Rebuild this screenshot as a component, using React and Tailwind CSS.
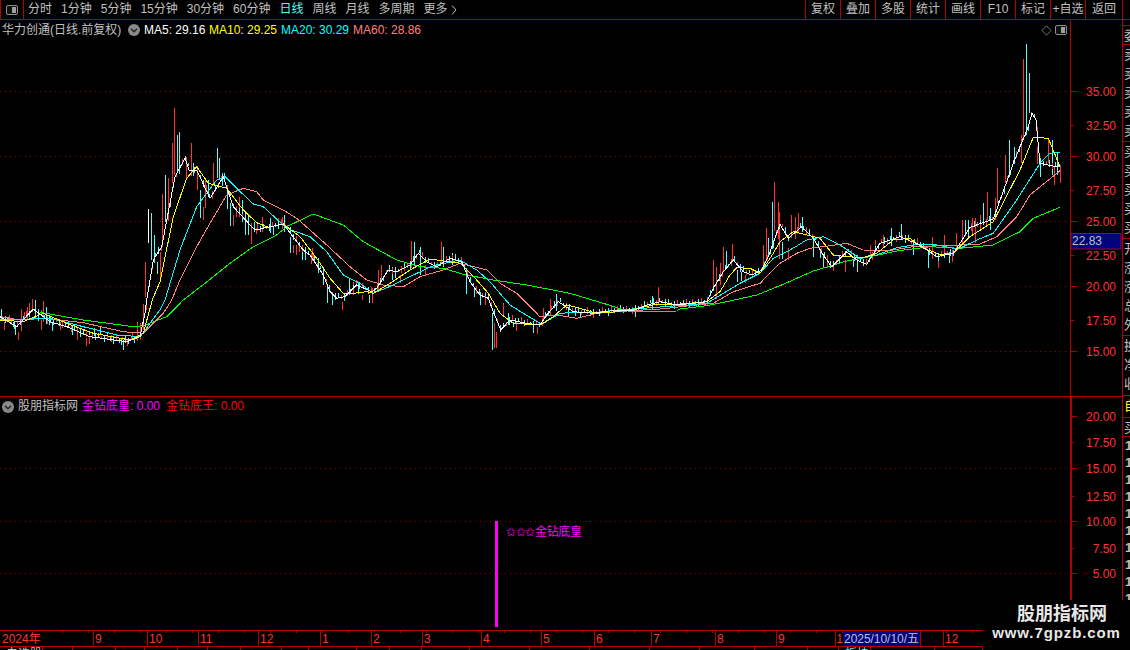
const RED = '#ff3232';
const CYAN = '#54fcfc';
const LINE = '#b00000';

// chart data was read off crops at 3x, so keep the crop origin and scale back here
const z = (ox, oy, pts) => pts.map(([x, y]) => [ox + x / 3, oy + y / 3]);
const A = (p) => z(0, 280, p);
const B = (p) => z(120, 100, p);
const C = (p) => z(310, 225, p);
const D = (p) => z(680, 175, p);
const E = (p) => z(960, 120, p);

const white = [
  ...A([[0, 110], [50, 140], [100, 87], [150, 125], [200, 140], [270, 170], [380, 185], [420, 170], [435, 100]]),
  ...B([[80, 600], [100, 480], [125, 440], [165, 230], [195, 175], [207, 210], [230, 210], [270, 295], [310, 230], [340, 320], [395, 380], [405, 390], [490, 372], [550, 450]]),
  ...C([[0, 90], [40, 150], [60, 200], [80, 220], [105, 215], [140, 180], [185, 200], [200, 190], [235, 135], [260, 140], [300, 120], [325, 85], [350, 110], [380, 125], [420, 100], [455, 110], [480, 170], [510, 210], [535, 220], [550, 260], [572, 315], [600, 285], [650, 295], [690, 300], [710, 270], [745, 230], [790, 260], [850, 265], [920, 255], [975, 255], [1010, 240], [1050, 230], [1100, 240]]),
  ...D([[80, 380], [100, 340], [130, 290], [160, 255], [190, 290], [215, 300], [245, 285], [265, 245], [300, 148], [325, 190], [365, 155], [400, 190], [430, 240], [455, 275], [500, 230], [530, 255], [560, 268], [600, 205], [660, 185], [720, 210], [770, 245], [820, 235]]),
  ...E([[0, 370], [30, 322], [100, 297], [160, 130], [205, 20], [216, -21], [228, 0], [240, 130], [290, 140], [300, 135]]),
];
const yellow = [
  ...A([[0, 120], [70, 125], [130, 100], [200, 130], [280, 160], [390, 180], [430, 160]]),
  ...B([[97, 600], [120, 545], [160, 350], [200, 235], [230, 200], [265, 250], [320, 265], [370, 330], [410, 368], [445, 382], [490, 372], [540, 410]]),
  ...C([[20, 100], [60, 160], [100, 205], [130, 205], [170, 200], [190, 205], [240, 175], [300, 135], [360, 102], [400, 108], [450, 115], [500, 165], [535, 205], [570, 265], [610, 295], [690, 300], [730, 275], [770, 240], [810, 250], [860, 265], [920, 260], [975, 252], [1030, 240], [1100, 238]]),
  ...D([[80, 380], [120, 350], [150, 300], [170, 278], [210, 280], [240, 295], [280, 235], [300, 200], [340, 170], [380, 180], [420, 190], [460, 240], [500, 245], [550, 248], [590, 235], [640, 195], [690, 190], [730, 220], [780, 238], [820, 235]]),
  ...E([[0, 380], [30, 350], [100, 305], [180, 150], [220, 52], [265, 55], [300, 140]]),
];
const cyan = [
  ...A([[0, 120], [60, 118], [150, 115], [250, 140], [350, 165], [420, 170], [480, 90]]),
  ...B([[135, 600], [180, 450], [230, 320], [290, 240], [315, 230], [350, 265], [400, 312], [430, 320], [500, 385]]),
  ...C([[0, 35], [50, 80], [100, 150], [150, 175], [190, 205], [250, 180], [310, 150], [370, 122], [450, 105], [500, 135], [540, 170], [600, 240], [640, 265], [695, 298], [750, 265], [800, 262], [860, 262], [920, 255], [1000, 250], [1100, 242]]),
  ...D([[0, 392], [80, 385], [130, 355], [180, 325], [240, 295], [280, 250], [330, 225], [380, 195], [430, 185], [480, 210], [540, 250], [590, 240], [650, 218], [710, 208], [770, 210], [830, 222]]),
  ...E([[0, 385], [50, 360], [100, 340], [170, 240], [240, 130], [270, 100], [300, 97]]),
];
const pink = [
  ...A([[0, 110], [60, 120], [130, 115], [250, 128], [370, 155], [430, 160], [490, 100]]),
  ...B([[155, 600], [180, 540], [230, 440], [270, 370], [320, 285], [370, 265], [410, 275], [430, 300], [490, 330], [530, 355]]),
  ...C([[0, 15], [50, 60], [120, 125], [170, 165], [220, 180], [280, 185], [330, 155], [400, 135], [450, 115], [530, 135], [570, 175], [620, 205], [690, 275], [740, 270], [800, 280], [860, 265], [950, 258], [1050, 252], [1100, 247]]),
  ...D([[0, 395], [100, 385], [160, 350], [240, 325], [300, 265], [350, 235], [390, 220], [450, 212], [500, 205], [550, 225], [620, 228], [700, 215], [780, 212]]),
  ...E([[0, 375], [60, 372], [110, 350], [170, 290], [210, 225], [300, 152]]),
];
const green = [
  ...A([[120, 97], [250, 120], [400, 140], [430, 137], [500, 110]]),
  ...B([[190, 600], [255, 550], [330, 490], [400, 440], [470, 405], [500, 380], [580, 342]]),
  ...C([[100, 0], [160, 50], [260, 105], [330, 125], [400, 130], [460, 148], [550, 165], [650, 180], [780, 205], [880, 235], [960, 260], [1100, 258]]),
  ...D([[0, 402], [80, 392], [150, 378], [230, 360], [310, 328], [400, 288], [500, 258], [570, 245], [650, 228], [750, 215]]),
  ...E([[0, 385], [100, 375], [180, 335], [220, 295], [300, 262]]),
];

const bars = (ox, oy, color, list) =>
  list.map(([x, t, b]) => ({ x: Math.round(ox + x / 3), top: Math.round(oy + t / 3), h: Math.max(1, Math.round((b - t) / 3)), color }));

const candles = [
  ...bars(0, 280, RED, [[13, 125, 148], [28, 105, 125], [55, 155, 180], [64, 88, 155], [72, 95, 115], [80, 80, 120], [88, 70, 105], [97, 57, 95], [130, 63, 125], [122, 120, 150], [180, 125, 150], [232, 145, 180], [258, 175, 198], [268, 170, 190], [334, 165, 185], [380, 180, 197], [395, 155, 180], [411, 125, 180], [421, 130, 180], [430, 72, 150]]),
  ...bars(0, 280, CYAN, [[4, 88, 125], [22, 110, 125], [38, 125, 140], [46, 135, 165], [105, 60, 115], [114, 100, 125], [139, 80, 130], [148, 105, 135], [157, 130, 155], [216, 135, 165], [282, 145, 170], [300, 140, 165], [320, 155, 175], [362, 175, 195], [370, 180, 210], [403, 175, 190]]),
  ...bars(120, 100, RED, [[163, 25, 225], [155, 130, 250], [145, 235, 365], [127, 282, 440], [121, 455, 530], [76, 485, 590], [214, 130, 230], [197, 170, 240], [280, 190, 250], [230, 210, 270], [256, 240, 325], [248, 320, 360], [358, 290, 350], [339, 345, 378], [349, 330, 352], [392, 385, 432], [408, 385, 402], [425, 350, 395], [475, 355, 385], [485, 350, 385], [520, 435, 460], [527, 435, 465], [536, 425, 455], [578, 460, 485], [572, 470, 490]]),
  ...bars(120, 100, CYAN, [[94, 338, 480], [103, 405, 490], [112, 485, 520], [136, 225, 365], [172, 105, 220], [178, 95, 210], [220, 190, 230], [239, 270, 355], [265, 240, 290], [290, 145, 235], [298, 175, 240], [307, 220, 260], [322, 260, 325], [331, 310, 380], [367, 300, 365], [375, 340, 405], [385, 345, 405], [402, 365, 395], [450, 355, 400], [460, 380, 405], [493, 345, 395], [511, 410, 458], [545, 450, 480], [555, 455, 480], [595, 480, 520]]),
  ...bars(120, 100, '#ffffff', [[85, 328, 430]]),
  ...bars(310, 225, RED, [[5, 70, 110], [95, 230, 255], [130, 170, 210], [155, 210, 225], [185, 190, 235], [203, 135, 200], [212, 120, 170], [270, 150, 175], [283, 115, 140], [303, 48, 130], [345, 120, 150], [392, 52, 115], [525, 200, 240], [553, 295, 370], [558, 320, 368], [578, 235, 270], [618, 290, 318], [650, 285, 300], [680, 305, 326], [700, 250, 290], [720, 222, 270], [1045, 185, 235], [850, 260, 278]]),
  ...bars(310, 225, CYAN, [[25, 100, 140], [40, 125, 180], [52, 180, 235], [67, 200, 240], [117, 160, 210], [143, 170, 205], [178, 210, 235], [245, 125, 165], [255, 130, 160], [313, 50, 120], [330, 65, 150], [400, 65, 120], [425, 85, 120], [468, 130, 208], [492, 190, 218], [510, 200, 240], [545, 265, 375], [595, 265, 300], [610, 290, 305], [670, 300, 325], [737, 208, 260], [775, 245, 275], [810, 265, 280], [975, 250, 276], [1025, 212, 250]]),
  ...bars(680, 175, RED, [[98, 255, 340], [108, 275, 370], [120, 265, 330], [130, 215, 290], [155, 208, 260], [195, 300, 325], [248, 210, 270], [283, 22, 170], [293, 80, 190], [258, 160, 260], [298, 110, 250], [323, 220, 255], [333, 120, 190], [345, 125, 190], [355, 115, 175], [440, 240, 278], [460, 260, 288], [495, 255, 292], [570, 210, 240], [585, 195, 230], [610, 180, 215], [757, 185, 250], [775, 250, 280], [793, 180, 240], [817, 225, 262], [827, 175, 215]]),
  ...bars(680, 175, CYAN, [[138, 228, 280], [172, 285, 320], [183, 290, 318], [275, 80, 220], [265, 190, 240], [305, 200, 250], [365, 125, 170], [400, 185, 245], [420, 225, 250], [430, 240, 278], [530, 240, 290], [520, 255, 275], [632, 160, 215], [663, 148, 195], [700, 195, 240], [743, 225, 280], [806, 230, 262]]),
  ...bars(960, 120, RED, [[5, 300, 360], [35, 295, 350], [45, 295, 370], [60, 285, 330], [80, 215, 300], [105, 235, 300], [112, 145, 250], [135, 105, 190], [182, 45, 130], [190, -30, 60], [232, 80, 130], [283, 140, 195], [265, 60, 130], [300, 135, 190]]),
  ...bars(960, 120, CYAN, [[15, 300, 340], [25, 300, 350], [70, 250, 315], [90, 265, 330], [148, 60, 170], [162, 80, 130], [240, 120, 170], [275, 60, 165], [290, 100, 165]]),
  ...bars(780, 0, CYAN, [[739, 132, 405], [748, 220, 340]]),
  ...bars(780, 0, RED, [[730, 178, 360]]),
];

// small filler candles that hug the fast average
const lineY = (pts, x) => {
  for (let i = 1; i < pts.length; i++) {
    if (pts[i][0] >= x) {
      const [x0, y0] = pts[i - 1];
      const [x1, y1] = pts[i];
      return y0 + ((y1 - y0) * (x - x0)) / Math.max(1, x1 - x0);
    }
  }
  return pts[pts.length - 1][1];
};
for (let x = 2, i = 0; x < 1060; x += 3, i++) {
  const r = (i * 37) % 11;
  const y = lineY(white, x);
  candles.push({ x, top: Math.round(y - 2 - r / 3), h: 3 + (r % 6), color: (i * 7) % 5 < 2 ? RED : CYAN });
}

const toPoints = (pts) => pts.map(([x, y]) => `${x.toFixed(1)},${y.toFixed(1)}`).join(' ');

const navItems = [
  { label: '分时' },
  { label: '1分钟' },
  { label: '5分钟' },
  { label: '15分钟' },
  { label: '30分钟' },
  { label: '60分钟' },
  { label: '日线', active: true },
  { label: '周线' },
  { label: '月线' },
  { label: '多周期' },
  { label: '更多' },
];
const toolButtons = ['复权', '叠加', '多股', '统计', '画线', 'F10', '标记', '+自选'];

const priceTicks = [
  { y: 91, label: '35.00', dots: true },
  { y: 125, label: '32.50' },
  { y: 156, label: '30.00', dots: true },
  { y: 190, label: '27.50' },
  { y: 221, label: '25.00', dots: true },
  { y: 255, label: '22.50' },
  { y: 286, label: '20.00', dots: true },
  { y: 320, label: '17.50' },
  { y: 351, label: '15.00', dots: true },
];
const indicatorTicks = [
  { y: 416, label: '20.00', major: true },
  { y: 442, label: '17.50' },
  { y: 468, label: '15.00', major: true, dots: true },
  { y: 496, label: '12.50' },
  { y: 521, label: '10.00', major: true, dots: true },
  { y: 548, label: '7.50' },
  { y: 573, label: '5.00', major: true, dots: true },
];
const months = [
  { x: 93, label: '9' },
  { x: 147, label: '10' },
  { x: 198, label: '11' },
  { x: 258, label: '12' },
  { x: 320, label: '1' },
  { x: 371, label: '2' },
  { x: 422, label: '3' },
  { x: 481, label: '4' },
  { x: 541, label: '5' },
  { x: 594, label: '6' },
  { x: 651, label: '7' },
  { x: 715, label: '8' },
  { x: 776, label: '9' },
  { x: 943, label: '12' },
];
const stripEdges = [43, 73, 116, 145, 178, 208, 241, 282, 309, 357, 390, 422, 470, 530, 590, 650, 700, 755, 808, 839, 871, 935, 983];

function CircleChevron({ className }) {
  return (
    <svg viewBox="0 0 12 12" width="12" height="12" className={className}>
      <circle cx="6" cy="6" r="6" fill="#8a8a8a" />
      <path d="M3 4.8 L6 7.8 L9 4.8" fill="none" stroke="#222" strokeWidth="1.4" />
    </svg>
  );
}

function PanelIcon({ className }) {
  return (
    <svg viewBox="0 0 12 10" width="12" height="10" className={className}>
      <rect x="0.5" y="0.5" width="11" height="9" rx="1.5" fill="#111" stroke="#909090" />
      <rect x="6" y="2" width="4" height="6" fill="#a0a0a0" />
    </svg>
  );
}

function TopBar() {
  return (
    <div className="flex h-[20px] shrink-0 border-b border-[#b00000] text-[12px] leading-[19px] text-[#c0c0c0]">
      <div className="flex w-[24px] shrink-0 items-center justify-center border-x border-[#b00000] pr-px">
        <PanelIcon />
      </div>
      <div className="ml-[4px] flex gap-[9px]">
        {navItems.map((item) => (
          <span key={item.label} className={item.active ? 'text-[#54fcfc]' : ''}>
            {item.label}
          </span>
        ))}
        <svg viewBox="0 0 6 10" width="6" height="10" className="-ml-[6px] mt-[5px]">
          <path d="M1 0.5 L5 5 L1 9.5" fill="none" stroke="#c0c0c0" />
        </svg>
      </div>
      <div className="ml-auto flex w-[318px] shrink-0">
        {toolButtons.map((label) => (
          <span key={label} className="w-[35px] shrink-0 border-l border-[#b00000] text-center">
            {label}
          </span>
        ))}
        <span className="flex-1 border-x border-[#b00000] text-center">返回</span>
      </div>
      <div className="w-[7px] shrink-0" />
    </div>
  );
}

function PriceChart() {
  return (
    <div className="relative h-[376px] w-[1070px] shrink-0">
      <svg viewBox="0 20 1070 376" width="1070" height="376" shapeRendering="crispEdges" className="block">
        {priceTicks.filter((t) => t.dots).map((t) => (
          <line key={t.y} x1="0" x2="1066" y1={t.y + 0.5} y2={t.y + 0.5} stroke="#a00000" strokeDasharray="1 4" />
        ))}
        {candles.map((c, i) => (
          <rect key={i} x={c.x} y={c.top} width="1" height={c.h} fill={c.color} />
        ))}
        <polyline points={toPoints(green)} fill="none" stroke="#00ff00" />
        <polyline points={toPoints(pink)} fill="none" stroke="#ff8080" />
        <polyline points={toPoints(cyan)} fill="none" stroke="#00ffff" />
        <polyline points={toPoints(yellow)} fill="none" stroke="#ffff00" />
        <polyline points={toPoints(white)} fill="none" stroke="#ffffff" />
      </svg>
      <div className="absolute left-[2px] right-[3px] top-[2px] flex items-center text-[12px] leading-[16px] text-[#c0c0c0]">
        <span className="w-[126px] shrink-0">华力创通(日线.前复权)</span>
        <CircleChevron className="shrink-0" />
        <span className="ml-[4px] w-[65px] shrink-0 text-white">MA5: 29.16</span>
        <span className="w-[72px] shrink-0 text-[#ffff00]">MA10: 29.25</span>
        <span className="w-[72px] shrink-0 text-[#00ffff]">MA20: 30.29</span>
        <span className="shrink-0 text-[#ff8080]">MA60: 28.86</span>
        <svg viewBox="0 0 12 12" width="11" height="11" className="ml-auto mr-[3px] shrink-0">
          <path d="M6 1 L11 6 L6 11 L1 6 Z" fill="none" stroke="#808080" />
        </svg>
        <PanelIcon className="shrink-0" />
      </div>
    </div>
  );
}

function PriceAxis() {
  return (
    <svg viewBox="1071 20 51 376" width="51" height="376" className="block border-l border-[#b00000] box-content">
      {priceTicks.map((t) => (
        <g key={t.y}>
          <rect x="1071" y={t.y} width={t.dots ? 6 : 3} height="1" fill={LINE} />
          <text x="1116" y={t.y + 5} textAnchor="end" fontSize="12" fill={RED}>
            {t.label}
          </text>
        </g>
      ))}
      <rect x="1071" y="233.5" width="50" height="15.5" fill="#000080" stroke="#a00040" />
      <text x="1072" y="245" fontSize="12" fill="#c0c0c0">
        22.83
      </text>
    </svg>
  );
}

function IndicatorChart() {
  return (
    <div className="relative h-[233px] w-[1070px] shrink-0">
      <svg viewBox="0 397 1070 233" width="1070" height="233" shapeRendering="crispEdges" className="block">
        {indicatorTicks.filter((t) => t.dots).map((t) => (
          <line key={t.y} x1="0" x2="1066" y1={t.y + 0.5} y2={t.y + 0.5} stroke="#a00000" strokeDasharray="1 4" />
        ))}
        <rect x="495" y="521" width="3" height="106" fill="#ff00ff" />
        <text x="506" y="536" fontSize="12" fill="#ff00ff" textLength="76">
          ✩✩✩金钻底皇
        </text>
      </svg>
      <div className="absolute left-[2px] top-[1px] flex items-center text-[12px] leading-[17px] text-[#c0c0c0]">
        <CircleChevron className="shrink-0" />
        <span className="ml-[4px] w-[64px] shrink-0">股朋指标网</span>
        <span className="w-[84px] shrink-0 text-[#ff00ff]">金钻底皇: 0.00</span>
        <span className="shrink-0 text-[#ff0000]">金钻底王: 0.00</span>
      </div>
    </div>
  );
}

function IndicatorAxis() {
  return (
    <svg viewBox="1072 397 50 233" width="50" height="233" className="block border-l-2 border-[#b00000] box-content">
      {indicatorTicks.map((t) => (
        <g key={t.y}>
          <rect x="1072" y={t.y} width={t.major ? 5 : 2} height="1" fill={LINE} />
          <text x="1116" y={t.y + 5} textAnchor="end" fontSize="12" fill={RED}>
            {t.label}
          </text>
        </g>
      ))}
    </svg>
  );
}

function TimeAxis() {
  const minor = [];
  for (let x = 62; x < 983; x += 26) minor.push(x);
  return (
    <div className="h-[17px] w-[983px] overflow-hidden">
      <svg viewBox="0 630 983 17" width="983" height="17" className="block">
        <rect x="0" y="630" width="983" height="1" fill={LINE} />
        <rect x="0" y="646" width="983" height="1" fill={LINE} />
        {minor.map((x) => (
          <rect key={x} x={x} y="631" width="1" height="2" fill={LINE} />
        ))}
        <text x="2" y="643" fontSize="12" fill={RED}>
          2024年
        </text>
        {months.map((m) => (
          <g key={m.x}>
            <rect x={m.x} y="631" width="1" height="15" fill={LINE} />
            <text x={m.x + 2} y="643" fontSize="12" fill={RED}>
              {m.label}
            </text>
          </g>
        ))}
        <rect x="835" y="631" width="1" height="15" fill={LINE} />
        <text x="836.3" y="643" fontSize="12" fill={RED}>
          1
        </text>
        <rect x="843" y="631" width="77" height="15" fill="#000080" />
        <rect x="920" y="631" width="1" height="15" fill={LINE} />
        <text x="844" y="643" fontSize="12" fill="#c0c0c0" textLength="75">
          2025/10/10/五
        </text>
      </svg>
    </div>
  );
}

function SideColumn() {
  const groups = [
    { h: 'h-[6px]', rows: [] },
    { h: 'h-[19px]', rows: ['委比'] },
    { h: 'h-[97px]', rows: ['卖', '卖', '卖', '卖', '卖'] },
    { h: 'h-[97px]', rows: ['买', '买', '买', '买', '买'] },
    { h: 'h-[97px]', rows: ['开', '涨', '涨', '总', '外'] },
    { h: 'h-[60px]', rows: ['换', '净', '收'] },
    { h: 'h-[22px]', rows: ['自'], color: 'text-[#ffff00]' },
    { h: 'h-[19px]', rows: ['买'] },
    { h: 'h-[193px]', rows: ['1', '1', '1', '1', '1', '1', '1', '1', '1', '1', '1'], pad: 'pl-[2px]', none: true },
  ];
  return (
    <div className="w-[8px] shrink-0 overflow-hidden border-l border-[#b00000] text-[13px] leading-[19px] text-[#c0c0c0]">
      {groups.map((g, i) => (
        <div
          key={i}
          className={`${g.h} ${g.color ?? ''} ${g.pad ?? 'pl-px'} ${g.none ? 'leading-[17px] font-bold' : 'border-b border-[#b00000]'} overflow-hidden`}
        >
          {g.rows.map((r, j) => (
            <div key={j} className="whitespace-nowrap">
              {r}
            </div>
          ))}
        </div>
      ))}
    </div>
  );
}

function BottomStrip() {
  return (
    <div className="flex h-[3px] overflow-hidden text-[12px] leading-[14px] text-[#c0c0c0]">
      {stripEdges.map((edge, i) => (
        <div
          key={edge}
          className="shrink-0 border-r border-[#b00000] pl-[6px]"
          style={{ width: edge - (i ? stripEdges[i - 1] : 0) }}
        >
          {i === 0 ? '自选股' : edge === 871 ? <span className="text-[#54fcfc]">板块</span> : ''}
        </div>
      ))}
    </div>
  );
}

export default function App() {
  return (
    <div className="relative h-[650px] w-[1130px] overflow-hidden bg-black font-['Liberation_Sans','Noto_Sans_CJK_SC',sans-serif]">
      <TopBar />
      <div className="flex">
        <div className="w-[1122px] shrink-0">
          <div className="flex border-b border-[#b00000]">
            <PriceChart />
            <PriceAxis />
          </div>
          <div className="flex">
            <IndicatorChart />
            <IndicatorAxis />
          </div>
        </div>
        <SideColumn />
      </div>
      <TimeAxis />
      <BottomStrip />
      <div className="absolute bottom-0 right-0 flex h-[50px] w-[147px] flex-col items-center bg-black pt-[2px] text-[#e8e8e8]">
        <span className="pl-[11px] text-[18px] font-bold leading-[24px]">股朋指标网</span>
        <span className="-mt-[1px] text-[15px] font-bold leading-[16px] tracking-[0.9px]">www.7gpzb.com</span>
      </div>
    </div>
  );
}
